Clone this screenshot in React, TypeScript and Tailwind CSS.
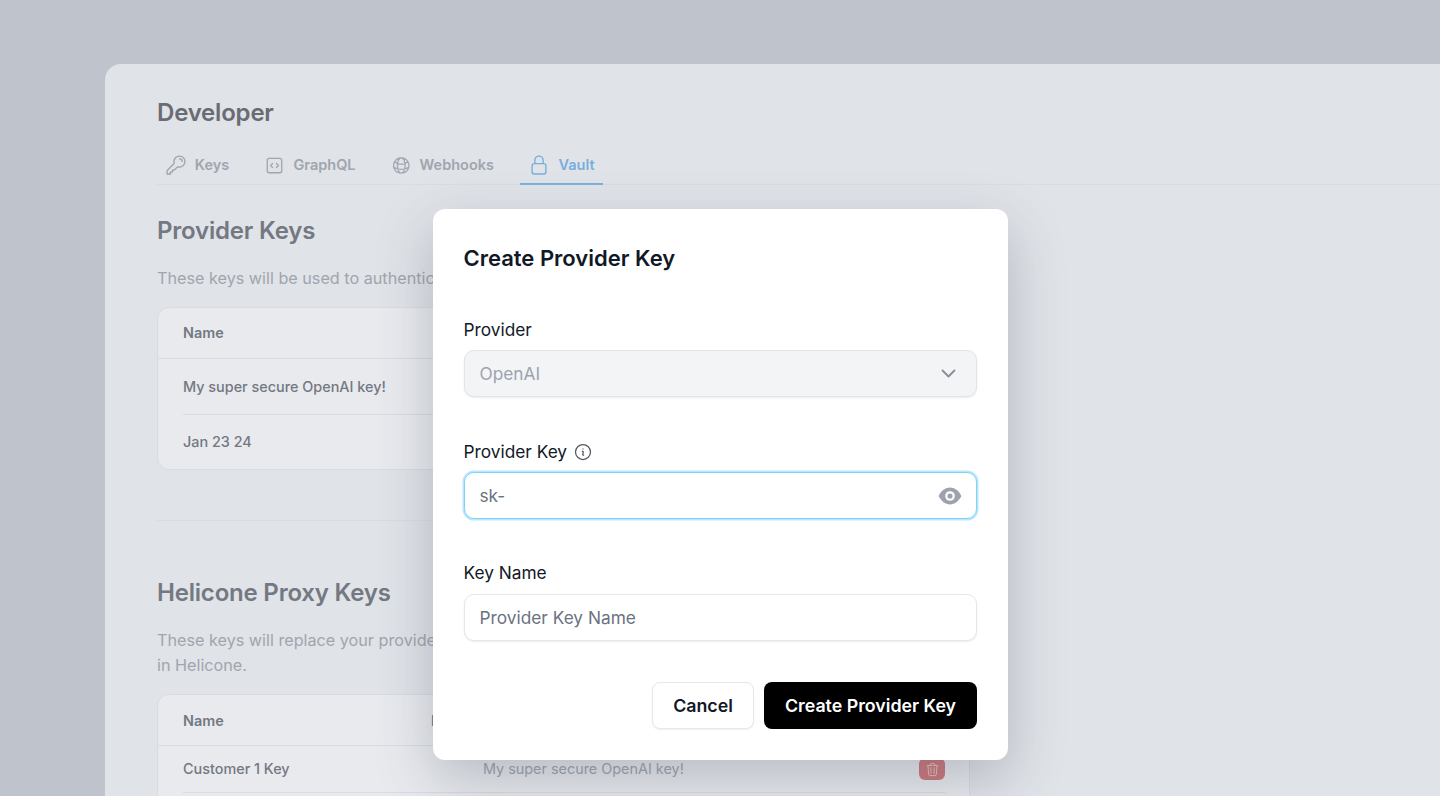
import React from "react";
import { HiOutlineKey, HiOutlineCodeBracketSquare, HiOutlineGlobeAlt, HiOutlineLockClosed, HiOutlineChevronDown, HiOutlineInformationCircle, HiOutlineTrash } from "react-icons/hi2";

const inter = "font-['Inter',sans-serif]";

function Tab({ icon, label, active, cls }: { icon: React.ReactNode; label: string; active?: boolean; cls: string }) {
  return (
    <div className={`flex h-[44px] items-center justify-center gap-2 border-b-2 pt-[6px] ${cls} ${active ? "border-[#7db2dd] text-[#78aedb]" : "border-transparent text-[#a0a5af]"}`}>
      {icon}
      <span className="text-[14.5px] font-semibold">{label}</span>
    </div>
  );
}

function EyeIcon() {
  return (
    <svg viewBox="0 0 24 18" className="h-[18px] w-[24px]">
      <path d="M0.6 9C3.4 3.6 7.4 0.6 12 0.6S20.6 3.6 23.4 9C20.6 14.4 16.6 17.4 12 17.4S3.4 14.4 0.6 9Z" fill="#9ca3af" />
      <circle cx="12" cy="9" r="4.8" fill="#ffffff" />
      <circle cx="12" cy="9" r="2.6" fill="#9ca3af" />
    </svg>
  );
}

export default function App() {
  return (
    <div className={`relative h-[796px] w-[1440px] overflow-hidden bg-[#bfc4cc] pl-[105px] pt-[64px] ${inter}`}>
      <div className="h-[732px] rounded-tl-2xl bg-[#e0e3e8] pl-[52px] pt-[33px]">
        <h1 className="text-[24px] font-semibold leading-[32px] tracking-[-0.2px] text-[#696c72]">Developer</h1>
        <div className="mt-[12px] flex h-[44px] border-b border-[#d9dce1]">
          <Tab cls="w-[80px]" icon={<HiOutlineKey className="h-[22px] w-[22px]" />} label="Keys" />
          <Tab cls="ml-[27px] w-[92px]" icon={<HiOutlineCodeBracketSquare className="h-[21px] w-[21px]" />} label="GraphQL" />
          <Tab cls="ml-[35px] w-[103px]" icon={<HiOutlineGlobeAlt className="h-[21px] w-[21px]" />} label="Webhooks" />
          <Tab cls="ml-[26px] w-[83px]" active icon={<HiOutlineLockClosed className="h-[22px] w-[22px]" />} label="Vault" />
        </div>

        <div className="w-[813px]">
          <h2 className="mt-[30px] text-[24px] font-semibold leading-[32px] tracking-[-0.2px] text-[#737882]">Provider Keys</h2>
          <p className="mt-[19px] text-[16.2px] leading-[24px] text-[#a0a5af]">These keys will be used to authenticate requests to your provider.</p>
          <div className="mt-[17px] h-[163px] rounded-xl border border-[#d8dbe1] bg-[#e8eaee]">
            <div className="flex h-[51px] items-center border-b border-[#d8dbe1] pl-[25px] text-[14.4px] font-semibold text-[#737882]">Name</div>
            <div className="ml-[25px] flex h-[56px] items-center border-b border-[#d8dbe1] text-[14.4px] font-medium text-[#737882]">My super secure OpenAI key!</div>
            <div className="flex h-[53px] items-center pl-[25px] text-[14.4px] font-medium text-[#737882]">Jan 23 24</div>
          </div>
          <div className="mt-[50px] h-px bg-[#d9dce1]" />
          <h2 className="mt-[56px] text-[24px] font-semibold leading-[32px] tracking-[-0.2px] text-[#737882]">Helicone Proxy Keys</h2>
          <p className="mt-[19px] text-[16.2px] leading-[25px] text-[#a0a5af]">
            These keys will replace your provider keys in your application and will be used to authenticate requests
            <br />
            in Helicone.
          </p>
          <div className="mt-[16px] h-[200px] rounded-xl border border-[#d8dbe1] bg-[#e8eaee]">
            <div className="flex h-[51px] items-center border-b border-[#d8dbe1] pl-[25px] pt-[1px] text-[14.4px] font-semibold text-[#737882]">
              <span className="w-[248px]">Name</span>
              <span>Key</span>
            </div>
            <div className="ml-[25px] mr-[24px] flex h-[47px] items-center border-b border-[#d8dbe1] text-[14.4px]">
              <span className="w-[300px] font-medium text-[#737882]">Customer 1 Key</span>
              <span className="flex-1 text-[#a0a5af]">My super secure OpenAI key!</span>
              <span className="flex h-[22px] w-[26px] items-center justify-center rounded-md bg-[#cc7a7c] text-[#efc4c4]">
                <HiOutlineTrash className="h-[15px] w-[15px]" />
              </span>
            </div>
          </div>
        </div>
      </div>

      <div className="absolute left-[433px] top-[209px] h-[551px] w-[575px] rounded-xl bg-white pl-[30.5px] pr-[31px] pt-[32px] shadow-[0_20px_55px_rgba(60,70,85,0.28)]">
        <h3 className="text-[22px] font-semibold leading-[34px] text-[#111827]">Create Provider Key</h3>
        <label className="mt-[43px] block text-[17.3px] leading-[24px] text-[#111827]">Provider</label>
        <div className="mt-[8px] flex h-[47px] items-center justify-between rounded-[10px] border border-[#e2e4e8] bg-[#f3f4f6] pl-[15px] pr-[18px] text-[#9ca3af] shadow-[0_1px_2px_rgba(0,0,0,0.08)]">
          <span className="text-[17.3px]">OpenAI</span>
          <HiOutlineChevronDown strokeWidth={2.4} className="h-[19px] w-[19px] text-[#8a8f99]" />
        </div>
        <div className="mt-[43px] flex items-center gap-[6px] text-[17.3px] leading-[24px] text-[#111827]">
          Provider Key
          <HiOutlineInformationCircle className="h-[20px] w-[20px] text-[#55595f]" />
        </div>
        <div className="mt-[8px] flex h-[47px] items-center justify-between rounded-[10px] border border-[#7dd3fc] bg-white pl-[15px] pr-[14px] text-[#6b7280] shadow-[0_0_0_1.5px_#bae6fd]">
          <span className="text-[17.3px]">sk-</span>
          <EyeIcon />
        </div>
        <label className="mt-[42px] block text-[17.3px] leading-[24px] text-[#111827]">Key Name</label>
        <div className="mt-[9px] flex h-[47px] items-center rounded-[10px] border border-[#e5e7eb] bg-white pl-[15px] text-[#6b7280] shadow-[0_1px_2px_rgba(0,0,0,0.08)]">
          <span className="text-[17.3px]">Provider Key Name</span>
        </div>
        <div className="mt-[41px] flex justify-end gap-[10px]">
          <div className="flex h-[47px] w-[102px] items-center justify-center rounded-lg border border-[#e5e7eb] bg-white pt-[1px] text-[17.8px] font-semibold text-[#111827] shadow-[0_1px_2px_rgba(0,0,0,0.06)]">Cancel</div>
          <div className="flex h-[47px] w-[213px] items-center justify-center rounded-lg bg-black pt-[1px] text-[17.8px] font-semibold text-white">Create Provider Key</div>
        </div>
      </div>
    </div>
  );
}
